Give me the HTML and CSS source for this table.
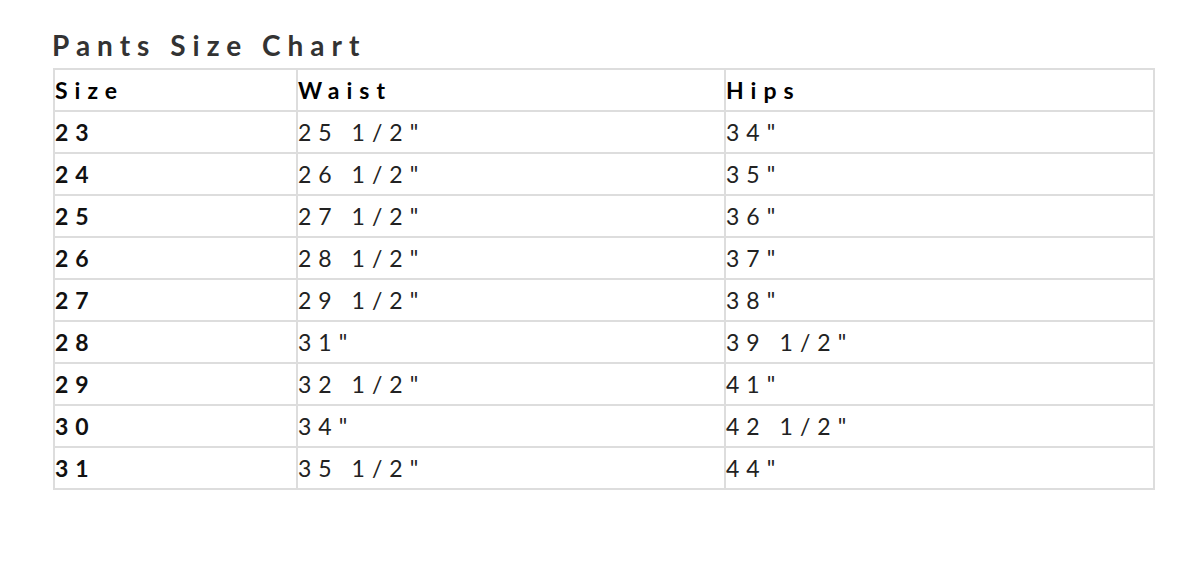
FILE: index.html
```html
<!DOCTYPE html>
<html>
<head>
<meta charset="utf-8">
<link rel="stylesheet" href="styles.css">
</head>
<body>
<div class="page">
  <h2 class="title">Pants Size Chart</h2>
  <table class="chart">
    <colgroup>
      <col class="c1"><col class="c2"><col class="c3">
    </colgroup>
    <thead>
      <tr><th>Size</th><th>Waist</th><th>Hips</th></tr>
    </thead>
    <tbody>
      <tr><td class="sz">23</td><td>25 1/2"</td><td>34"</td></tr>
      <tr><td class="sz">24</td><td>26 1/2"</td><td>35"</td></tr>
      <tr><td class="sz">25</td><td>27 1/2"</td><td>36"</td></tr>
      <tr><td class="sz">26</td><td>28 1/2"</td><td>37"</td></tr>
      <tr><td class="sz">27</td><td>29 1/2"</td><td>38"</td></tr>
      <tr><td class="sz">28</td><td>31"</td><td>39 1/2"</td></tr>
      <tr><td class="sz">29</td><td>32 1/2"</td><td>41"</td></tr>
      <tr><td class="sz">30</td><td>34"</td><td>42 1/2"</td></tr>
      <tr><td class="sz">31</td><td>35 1/2"</td><td>44"</td></tr>
    </tbody>
  </table>
</div>
</body>
</html>
```
FILE: styles.css
```css
html, body {
  margin: 0;
  padding: 0;
  background: #fff;
}
.page {
  padding: 29px 0 0 53px;
  font-family: Lato, "Liberation Sans", sans-serif;
}
.title {
  margin: 0 0 5px -1px;
  font-size: 28px;
  line-height: 1.2;
  font-weight: 700;
  color: #333;
  letter-spacing: 7px;
}
.chart {
  border-collapse: collapse;
  width: 1100px;
  table-layout: fixed;
}
.c1 { width: 243px; }
.c2 { width: 428px; }
.c3 { width: 429px; }
.chart th, .chart td {
  border: 2px solid #dddddd;
  height: 40px;
  padding: 0 1px 0 0;
  text-align: left;
  vertical-align: middle;
  font-size: 23px;
  line-height: 40px;
  letter-spacing: 7px;
  color: #222;
  font-weight: 400;
}
.chart th {
  font-weight: 700;
  color: #000;
}
.chart td.sz {
  font-weight: 700;
  color: #111;
}
```
